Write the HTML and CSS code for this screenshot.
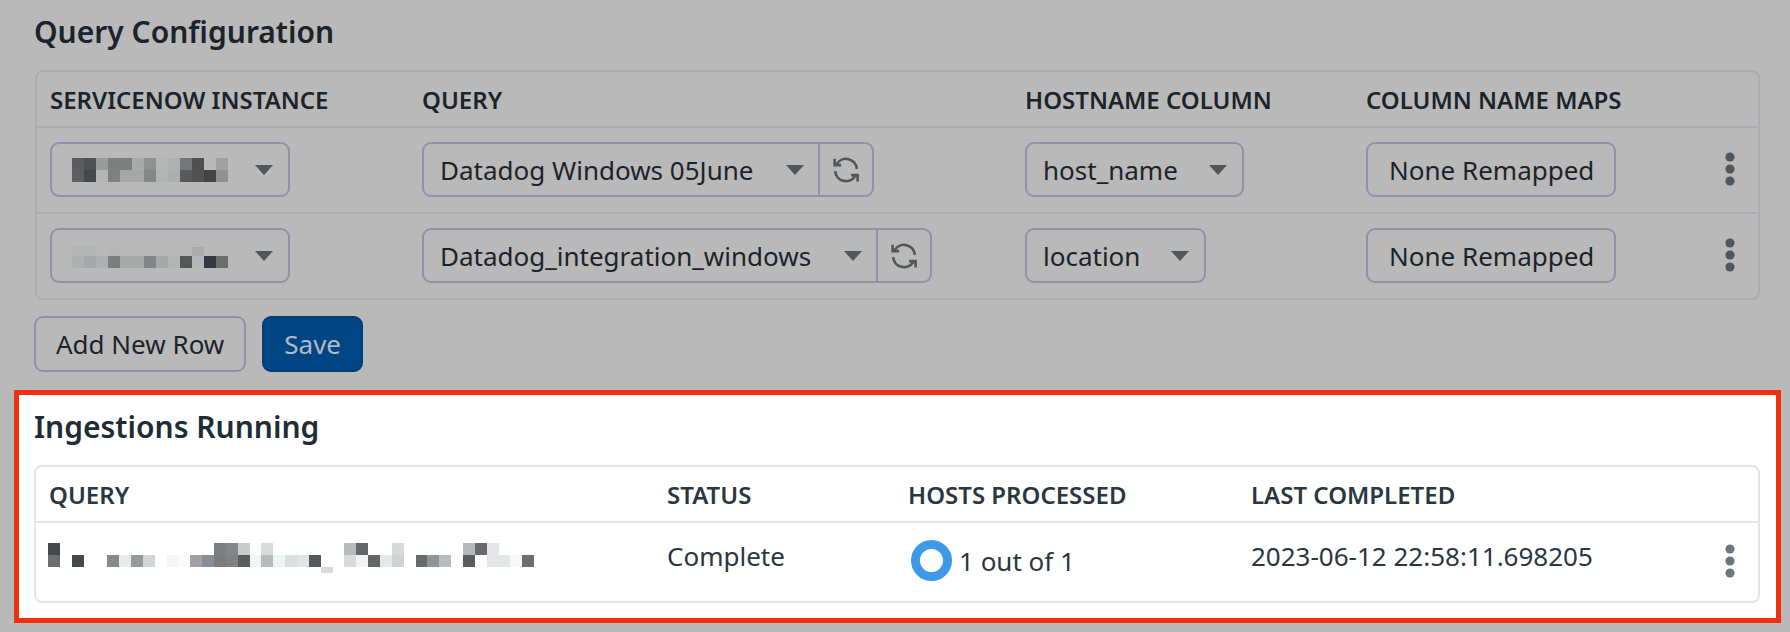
FILE: index.html
```html
<!DOCTYPE html>
<html lang="en">
<head>
    <meta charset="UTF-8">
    <meta name="viewport" content="width=device-width, initial-scale=1.0">
    <title>Query Configuration</title>
    <link rel="stylesheet" href="styles.css">
</head>
<body>
    <!-- Hidden icon definitions, reused below -->
    <svg class="icon-defs" aria-hidden="true">
        <symbol id="refresh" viewBox="0 0 24 24">
            <path d="M3.5 6.5A10 10 0 0 1 22 11M1.5 1.5V7.5H7.5M2 13A10 10 0 0 0 20.5 17.5M22.7 22.7V16.7H16.7" fill="none" stroke="currentColor" stroke-width="2.4"/>
        </symbol>
        <symbol id="dots" viewBox="0 0 10 34">
            <circle cx="5" cy="5" r="4.6" fill="currentColor"/>
            <circle cx="5" cy="17" r="4.6" fill="currentColor"/>
            <circle cx="5" cy="29" r="4.6" fill="currentColor"/>
        </symbol>
    </svg>

    <section class="config">
        <h2>Query Configuration</h2>
        <div class="table-box">
            <table>
                <colgroup>
                    <col class="c-instance"><col class="c-query"><col class="c-host"><col class="c-maps"><col>
                </colgroup>
                <thead>
                    <tr>
                        <th>SERVICENOW INSTANCE</th>
                        <th>QUERY</th>
                        <th>HOSTNAME COLUMN</th>
                        <th>COLUMN NAME MAPS</th>
                        <th></th>
                    </tr>
                </thead>
                <tbody>
                    <tr>
                        <td>
                            <div class="select select-instance">
                                <svg class="mosaic" width="156" height="24" viewBox="0 0 156 24" shape-rendering="crispEdges">
                                    <rect x="0" width="12" height="12" fill="#5a5c5f"/><rect x="12" width="12" height="12" fill="#4f5255"/><rect x="24" width="12" height="12" fill="#9a9c9c"/><rect x="36" width="24" height="12" fill="#7d7f7f"/><rect x="60" width="12" height="12" fill="#a8abab"/><rect x="72" width="12" height="12" fill="#8e9192"/><rect x="84" width="12" height="12" fill="#b5b7b7"/><rect x="96" width="12" height="12" fill="#afb2b2"/><rect x="108" width="12" height="12" fill="#747677"/><rect x="120" width="12" height="12" fill="#4e5051"/><rect x="144" width="12" height="12" fill="#a0a1a1"/>
                                    <rect x="0" y="12" width="12" height="12" fill="#5c5e60"/><rect x="12" y="12" width="12" height="12" fill="#46494c"/><rect x="24" y="12" width="12" height="12" fill="#b5b7b7"/><rect x="36" y="12" width="12" height="12" fill="#7f8181"/><rect x="48" y="12" width="24" height="12" fill="#a5a7a7"/><rect x="72" y="12" width="12" height="12" fill="#858889"/><rect x="84" y="12" width="12" height="12" fill="#b3b5b5"/><rect x="96" y="12" width="12" height="12" fill="#acafaf"/><rect x="108" y="12" width="12" height="12" fill="#58595b"/><rect x="120" y="12" width="12" height="12" fill="#505254"/><rect x="132" y="12" width="12" height="12" fill="#434446"/><rect x="144" y="12" width="12" height="12" fill="#909191"/>
                                </svg>
                                <span class="caret"></span>
                            </div>
                        </td>
                        <td>
                            <div class="query-group">
                                <div class="select">Datadog Windows 05June<span class="caret"></span></div>
                                <div class="refresh"><svg width="26" height="26"><use href="#refresh"/></svg></div>
                            </div>
                        </td>
                        <td><div class="select">host_name<span class="caret"></span></div></td>
                        <td><button class="btn btn-map" type="button">None Remapped</button></td>
                        <td class="actions"><svg class="dots" width="10" height="34"><use href="#dots"/></svg></td>
                    </tr>
                    <tr>
                        <td>
                            <div class="select select-instance">
                                <svg class="mosaic" width="156" height="24" viewBox="0 0 156 24" shape-rendering="crispEdges">
                                    <rect x="0" y="3" width="24" height="9" fill="#b3b5b5"/><rect x="36" y="3" width="12" height="9" fill="#b5b6b7"/><rect x="120" y="3" width="12" height="9" fill="#ababab"/>
                                    <rect x="0" y="12" width="12" height="12" fill="#adb0b0"/><rect x="12" y="12" width="12" height="12" fill="#a3a9a9"/><rect x="24" y="12" width="12" height="12" fill="#adb0b0"/><rect x="36" y="12" width="12" height="12" fill="#7b7d7e"/><rect x="48" y="12" width="24" height="12" fill="#a9abab"/><rect x="72" y="12" width="12" height="12" fill="#828485"/><rect x="84" y="12" width="12" height="12" fill="#a6a9a9"/><rect x="96" y="12" width="12" height="12" fill="#b3b5b5"/><rect x="108" y="12" width="12" height="12" fill="#545658"/><rect x="120" y="12" width="12" height="12" fill="#b5b7b7"/><rect x="132" y="12" width="12" height="12" fill="#353a40"/><rect x="144" y="12" width="12" height="12" fill="#6c6d6e"/>
                                </svg>
                                <span class="caret"></span>
                            </div>
                        </td>
                        <td>
                            <div class="query-group">
                                <div class="select">Datadog_integration_windows<span class="caret"></span></div>
                                <div class="refresh"><svg width="26" height="26"><use href="#refresh"/></svg></div>
                            </div>
                        </td>
                        <td><div class="select">location<span class="caret"></span></div></td>
                        <td><button class="btn btn-map" type="button">None Remapped</button></td>
                        <td class="actions"><svg class="dots" width="10" height="34"><use href="#dots"/></svg></td>
                    </tr>
                </tbody>
            </table>
        </div>
        <div class="buttons">
            <button class="btn" type="button">Add New Row</button>
            <button class="btn btn-primary" type="button">Save</button>
        </div>
    </section>

    <section class="ingestions">
        <h2>Ingestions Running</h2>
        <div class="table-box">
            <table>
                <colgroup>
                    <col class="c-name"><col class="c-status"><col class="c-hosts"><col class="c-last"><col>
                </colgroup>
                <thead>
                    <tr>
                        <th>QUERY</th>
                        <th>STATUS</th>
                        <th>HOSTS PROCESSED</th>
                        <th>LAST COMPLETED</th>
                        <th></th>
                    </tr>
                </thead>
                <tbody>
                    <tr>
                        <td>
                            <svg class="mosaic-name" width="498" height="30" viewBox="0 0 504 30" shape-rendering="crispEdges">
                                <g>
                                    <rect x="0" width="12" height="12" fill="#44494d"/><rect x="168" width="12" height="12" fill="#7c7e7f"/><rect x="180" width="12" height="12" fill="#838586"/><rect x="192" width="12" height="12" fill="#c9cbcc"/><rect x="216" width="12" height="12" fill="#d5dcdc"/><rect x="300" width="12" height="12" fill="#b8bbbb"/><rect x="312" width="12" height="12" fill="#656667"/><rect x="348" width="12" height="12" fill="#d8dada"/><rect x="420" width="12" height="12" fill="#b5b8bc"/><rect x="432" width="12" height="12" fill="#6a6a6e"/><rect x="444" width="12" height="12" fill="#e4e5e6"/>
                                </g>
                                <g transform="translate(0 12)">
                                    <rect x="0" width="12" height="12" fill="#6c6e70"/><rect x="24" width="12" height="12" fill="#44494c"/><rect x="60" width="12" height="12" fill="#868a8b"/><rect x="72" width="12" height="12" fill="#e8eaeb"/><rect x="84" width="12" height="12" fill="#979a9b"/><rect x="96" width="12" height="12" fill="#d3d6d7"/><rect x="120" width="12" height="12" fill="#f3f4f5"/><rect x="132" width="12" height="12" fill="#f8fafb"/><rect x="144" width="12" height="12" fill="#9fa1a3"/><rect x="156" width="12" height="12" fill="#858e94"/><rect x="168" width="12" height="12" fill="#7a7c7d"/><rect x="180" width="12" height="12" fill="#7f8182"/><rect x="192" width="12" height="12" fill="#5a5c5e"/><rect x="204" width="12" height="12" fill="#f0f4f4"/><rect x="216" width="12" height="12" fill="#b5baba"/><rect x="228" width="12" height="12" fill="#eef3f4"/><rect x="240" width="12" height="12" fill="#dcdfe0"/><rect x="252" width="12" height="12" fill="#e2e5e5"/><rect x="264" width="12" height="12" fill="#56595b"/><rect x="300" width="12" height="12" fill="#d8dadb"/><rect x="312" width="12" height="12" fill="#f2f2f4"/><rect x="324" width="12" height="12" fill="#636566"/><rect x="336" width="12" height="12" fill="#e4e8e9"/><rect x="348" width="12" height="12" fill="#d0d2d3"/><rect x="372" width="12" height="12" fill="#686a6b"/><rect x="384" width="12" height="12" fill="#8f939a"/><rect x="396" width="12" height="12" fill="#b8babb"/><rect x="420" width="12" height="12" fill="#5a5c5e"/><rect x="444" width="12" height="12" fill="#e4e5e6"/><rect x="456" width="12" height="12" fill="#e3e6e6"/><rect x="468" width="12" height="12" fill="#f6f7f7"/><rect x="480" width="12" height="12" fill="#6b6d6e"/>
                                </g>
                                <rect x="276" y="24" width="12" height="6" fill="#d8dada"/>
                            </svg>
                        </td>
                        <td>Complete</td>
                        <td>
                            <div class="progress">
                                <span class="ring"></span>
                                <span class="progress-text">1 out of 1</span>
                            </div>
                        </td>
                        <td>2023-06-12 22:58:11.698205</td>
                        <td class="actions"><svg class="dots" width="10" height="34"><use href="#dots"/></svg></td>
                    </tr>
                </tbody>
            </table>
        </div>
    </section>
</body>
</html>
```

FILE: styles.css
```css
body {
    margin: 0;
    background-color: #b9b9b9;
    color: #1c242a;
    font-family: "Noto Sans", sans-serif;
    font-size: 26px;
}

.icon-defs {
    display: none;
}

h2 {
    margin: 0;
    font-size: 30px;
    font-weight: 600;
    line-height: 38px;
}

/* Dimmed top part */
.config {
    padding: 13px 30px 18px 34px;
}

.config .table-box {
    margin: 19px 0 0 1px;
    border-color: #acacb3;
}

.table-box {
    border: 2px solid #e3e5ea;
    border-radius: 8px;
}

table {
    width: 100%;
    border-collapse: collapse;
    table-layout: fixed;
}

th {
    height: 54px;
    padding: 0 13px;
    font-size: 24px;
    font-weight: 600;
    text-align: left;
    white-space: nowrap;
}

td {
    padding: 14px 13px 15px;
    border-top: 2px solid #acacb3;
}

.c-instance { width: 372px; }
.c-query { width: 603px; }
.c-host { width: 341px; }
.c-maps { width: 364px; }

.select {
    display: inline-flex;
    align-items: center;
    box-sizing: border-box;
    height: 55px;
    padding: 0 15px 0 16px;
    border: 2px solid #9292a6;
    border-radius: 9px;
    white-space: nowrap;
}

.select-instance {
    display: flex;
    width: 240px;
    padding-left: 20px;
}

.mosaic {
    display: block;
    margin-right: 27px;
}

.caret {
    width: 0;
    height: 0;
    margin-left: 31px;
    border-top: 10px solid #50565a;
    border-left: 9px solid transparent;
    border-right: 9px solid transparent;
}

.select-instance .caret {
    margin-left: 0;
}

.query-group {
    display: inline-flex;
}

.query-group .select {
    padding-right: 14px;
    border-radius: 9px 0 0 9px;
}

.query-group .caret {
    margin-left: 33px;
}

.refresh {
    display: flex;
    align-items: center;
    justify-content: center;
    box-sizing: border-box;
    width: 54px;
    height: 55px;
    border: 2px solid #9292a6;
    border-left: none;
    border-radius: 0 9px 9px 0;
    color: #50565a;
}

.btn {
    box-sizing: border-box;
    height: 56px;
    padding: 0 20px;
    background: transparent;
    border: 2px solid #9292a6;
    border-radius: 9px;
    color: #1c242a;
    font-family: "Noto Sans", sans-serif;
    font-size: 26px;
}

.btn-map {
    height: 55px;
    padding: 0 20px 0 21px;
}

.btn-primary {
    background: #004684;
    border-color: #003f78;
    color: #b0bac4;
}

.buttons {
    display: flex;
    gap: 16px;
    margin-top: 16px;
}

.actions {
    vertical-align: top;
    padding-left: 0;
    padding-top: 24px;
}

.dots {
    display: block;
    margin-left: 8px;
    color: #50565a;
}

/* Highlighted bottom part */
.ingestions {
    margin: 0 9px 0 14px;
    padding: 13px 16px 15px 15px;
    background: #fff;
    border: 5px solid #f2300f;
    color: #2a3640;
}

.ingestions h2 {
    color: #1f2c35;
}

.ingestions .table-box {
    margin-top: 19px;
}

.ingestions td {
    vertical-align: top;
    padding-top: 15px;
    padding-bottom: 22px;
    border-top-color: #e3e5ea;
}

.ingestions .actions {
    padding-top: 21px;
}

.ingestions .dots {
    margin-left: 9px;
    color: #6c7680;
}

.c-name { width: 618px; }
.c-status { width: 241px; }
.c-hosts { width: 343px; }
.c-last { width: 478px; }

.mosaic-name {
    display: block;
    margin: 5px 0 0 -1px;
}

.progress {
    display: flex;
    align-items: flex-end;
    gap: 7px;
}

.ring {
    box-sizing: border-box;
    width: 41px;
    height: 41px;
    margin: 2px 0 -2px 3px;
    border: 9px solid #3e9ae8;
    border-radius: 50%;
}

.progress-text {
    line-height: 36px;
}
```
